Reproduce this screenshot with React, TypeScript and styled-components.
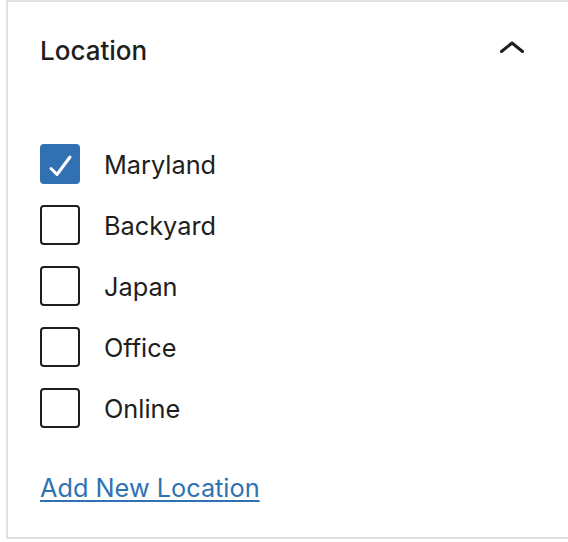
import React, { useState } from "react";
import styled, { createGlobalStyle } from "styled-components";

const GlobalStyle = createGlobalStyle`
  html, body {
    margin: 0;
    padding: 0;
    background: #fff;
  }
  body {
    font-family: Inter, "Noto Sans", sans-serif;
    color: #1e1e1e;
  }
`;

const locations = ["Maryland", "Backyard", "Japan", "Office", "Online"];

export default function App() {
  const [checked, setChecked] = useState<string[]>(["Maryland"]);
  const [open, setOpen] = useState(true);

  const toggle = (name: string) =>
    setChecked((prev) =>
      prev.includes(name) ? prev.filter((n) => n !== name) : [...prev, name]
    );

  return (
    <>
      <GlobalStyle />
      <Panel>
        <Header>
          <Title>Location</Title>
          <ToggleButton onClick={() => setOpen(!open)} aria-label="Toggle panel">
            <svg width="26" height="14" viewBox="0 0 26 14" fill="none">
              <path
                d="M2.5 11.5 L13 3 L23.5 11.5"
                stroke="#1e1e1e"
                strokeWidth="3"
                strokeLinecap="round"
                strokeLinejoin="round"
              />
            </svg>
          </ToggleButton>
        </Header>
        {open && (
          <Body>
            <List>
              {locations.map((name) => {
                const isChecked = checked.includes(name);
                return (
                  <Row key={name} onClick={() => toggle(name)}>
                    <Box checked={isChecked}>
                      {isChecked && (
                        <svg width="40" height="40" viewBox="0 0 40 40" fill="none">
                          <path
                            d="M11 24.5 L17 30.5 L30 13"
                            stroke="#fff"
                            strokeWidth="3"
                            strokeLinecap="round"
                            strokeLinejoin="round"
                          />
                        </svg>
                      )}
                    </Box>
                    <Label>{name}</Label>
                  </Row>
                );
              })}
            </List>
            <AddLink href="#">Add New Location</AddLink>
          </Body>
        )}
      </Panel>
    </>
  );
}

const Panel = styled.div`
  margin-left: 6px;
  height: 539px;
  box-sizing: border-box;
  border-top: 2px solid #e0e0e0;
  border-left: 2px solid #e0e0e0;
  border-bottom: 2px solid #e0e0e0;
  background: #fff;
`;

const Header = styled.div`
  height: 96px;
  display: flex;
  align-items: center;
  justify-content: space-between;
  padding: 0 43px 0 32px;
`;

const Title = styled.h2`
  margin: 0;
  font-size: 26px;
  font-weight: 500;
  color: #1e1e1e;
`;

const ToggleButton = styled.button`
  border: 0;
  background: none;
  padding: 0;
  margin-top: -7px;
  display: flex;
  cursor: pointer;
`;

const Body = styled.div`
  padding: 46px 32px 0;
`;

const List = styled.div`
  display: flex;
  flex-direction: column;
  gap: 21px;
`;

const Row = styled.label`
  display: flex;
  align-items: center;
  gap: 24px;
  height: 40px;
  cursor: pointer;
`;

const Box = styled.span<{ checked: boolean }>`
  width: 40px;
  height: 40px;
  box-sizing: border-box;
  border-radius: 4px;
  border: 2px solid ${(p) => (p.checked ? "#3171b3" : "#1e1e1e")};
  background: ${(p) => (p.checked ? "#3171b3" : "#fff")};
  display: flex;
  align-items: center;
  justify-content: center;
  flex-shrink: 0;
  svg {
    margin: -2px;
  }
`;

const Label = styled.span`
  font-size: 25.3px;
  color: #1e1e1e;
`;

const AddLink = styled.a`
  display: inline-block;
  margin-top: 40px;
  font-size: 25.3px;
  line-height: 40px;
  color: #2f72b3;
  text-decoration: underline;
  text-decoration-thickness: 2px;
  text-underline-offset: 3px;
`;
